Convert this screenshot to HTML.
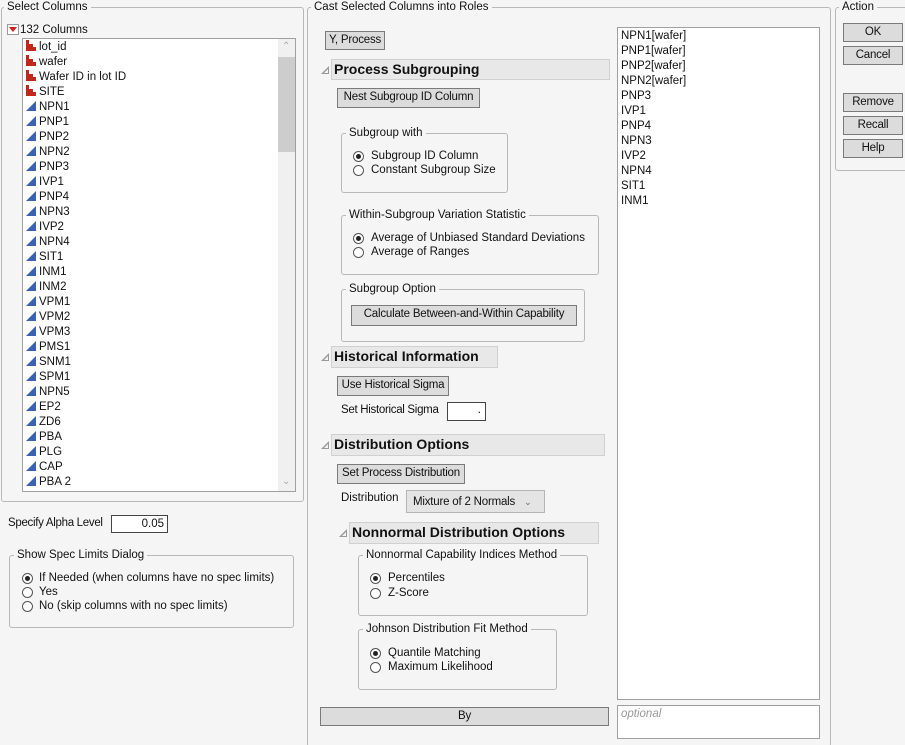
<!DOCTYPE html>
<html style="overflow:hidden;height:745px"><head><style>
*{box-sizing:border-box;margin:0;padding:0}
body{width:905px;height:745px;background:#f5f5f5;font-family:"Liberation Sans",sans-serif;font-size:11.5px;color:#111;position:relative;overflow:hidden}
.a{position:absolute;white-space:nowrap}
.fs{position:absolute;border:1px solid #b8b8b8;border-radius:3px}
.lg{position:absolute;background:#f5f5f5;padding:0 3px;line-height:14px;white-space:nowrap}
.btn{position:absolute;background:#dcdcdc;border:1px solid #7a7a7a;text-align:center;line-height:17px;white-space:nowrap;overflow:hidden;letter-spacing:-0.2px}
.hdr{position:absolute;background:#e8e8e8;border:1px solid #d0d0d0;font-weight:bold;font-size:14px;line-height:19px;padding-left:2px}
.tri{position:absolute;width:0;height:0;border-left:8px solid transparent;border-bottom:8px solid #999}
.tri::after{content:"";position:absolute;left:-5px;top:3px;width:0;height:0;border-left:4px solid transparent;border-bottom:4px solid #f5f5f5}
.rad{position:absolute;width:11px;height:11px;border:1px solid #555;border-radius:50%;background:#fff}
.rad.on::after{content:"";position:absolute;left:2px;top:2px;width:5px;height:5px;border-radius:50%;background:#222}
.box{position:absolute;background:#fff;border:1px solid #a0a0a0}
.it{position:absolute;left:3px;height:15px;line-height:15px}
.nom{display:inline-block;width:10px;height:11px;vertical-align:-1px;margin-right:3px;position:relative}
.nom i{position:absolute;bottom:0;background:#c0281e;width:3px}
.con{display:inline-block;width:0;height:0;border-left:10px solid transparent;border-bottom:10px solid #3b62b0;margin-right:3px;vertical-align:-1px}
</style></head><body>

<div class="fs" style="left:1px;top:7px;width:303px;height:495px"></div>
<div class="lg" style="left:4px;top:0">Select Columns</div>
<div class="a" style="left:7px;top:24px;width:12px;height:11px;border:1px solid #999;background:#fff"></div>
<div class="a" style="left:9px;top:27px;width:0;height:0;border-left:4px solid transparent;border-right:4px solid transparent;border-top:5px solid #d0201a"></div>
<div class="a" style="left:20px;top:23px;line-height:14px">132 Columns</div>
<div class="box" style="left:22px;top:38px;width:274px;height:454px;overflow:hidden">
 <div class="a" style="left:255px;top:0;width:17px;height:452px;background:#f0f0f0"></div>
 <div class="a" style="left:255px;top:18px;width:17px;height:95px;background:#cdcdcd"></div>
 <div class="a" style="left:259px;top:2px;color:#aaa;font-size:10px">&#8963;</div>
 <div class="a" style="left:259px;top:437px;color:#aaa;font-size:10px">&#8964;</div>
 <div class="it" style="top:1px"><span class="nom"><i style="left:0;height:11px"></i><i style="left:3px;height:7px;width:4px"></i><i style="left:7px;height:4px"></i></span>lot_id</div>
 <div class="it" style="top:16px"><span class="nom"><i style="left:0;height:11px"></i><i style="left:3px;height:7px;width:4px"></i><i style="left:7px;height:4px"></i></span>wafer</div>
 <div class="it" style="top:31px"><span class="nom"><i style="left:0;height:11px"></i><i style="left:3px;height:7px;width:4px"></i><i style="left:7px;height:4px"></i></span>Wafer ID in lot ID</div>
 <div class="it" style="top:46px"><span class="nom"><i style="left:0;height:11px"></i><i style="left:3px;height:7px;width:4px"></i><i style="left:7px;height:4px"></i></span>SITE</div>
 <div class="it" style="top:61px"><span class="con"></span>NPN1</div>
 <div class="it" style="top:76px"><span class="con"></span>PNP1</div>
 <div class="it" style="top:91px"><span class="con"></span>PNP2</div>
 <div class="it" style="top:106px"><span class="con"></span>NPN2</div>
 <div class="it" style="top:121px"><span class="con"></span>PNP3</div>
 <div class="it" style="top:136px"><span class="con"></span>IVP1</div>
 <div class="it" style="top:151px"><span class="con"></span>PNP4</div>
 <div class="it" style="top:166px"><span class="con"></span>NPN3</div>
 <div class="it" style="top:181px"><span class="con"></span>IVP2</div>
 <div class="it" style="top:196px"><span class="con"></span>NPN4</div>
 <div class="it" style="top:211px"><span class="con"></span>SIT1</div>
 <div class="it" style="top:226px"><span class="con"></span>INM1</div>
 <div class="it" style="top:241px"><span class="con"></span>INM2</div>
 <div class="it" style="top:256px"><span class="con"></span>VPM1</div>
 <div class="it" style="top:271px"><span class="con"></span>VPM2</div>
 <div class="it" style="top:286px"><span class="con"></span>VPM3</div>
 <div class="it" style="top:301px"><span class="con"></span>PMS1</div>
 <div class="it" style="top:316px"><span class="con"></span>SNM1</div>
 <div class="it" style="top:331px"><span class="con"></span>SPM1</div>
 <div class="it" style="top:346px"><span class="con"></span>NPN5</div>
 <div class="it" style="top:361px"><span class="con"></span>EP2</div>
 <div class="it" style="top:376px"><span class="con"></span>ZD6</div>
 <div class="it" style="top:391px"><span class="con"></span>PBA</div>
 <div class="it" style="top:406px"><span class="con"></span>PLG</div>
 <div class="it" style="top:421px"><span class="con"></span>CAP</div>
 <div class="it" style="top:436px"><span class="con"></span>PBA 2</div>
</div>

<div class="a" style="left:8px;top:517px;letter-spacing:-0.3px">Specify Alpha Level</div>
<div class="box" style="left:111px;top:515px;width:57px;height:18px;text-align:right;padding-right:3px;line-height:16px;border-color:#444">0.05</div>
<div class="fs" style="left:9px;top:555px;width:285px;height:73px"></div>
<div class="lg" style="left:14px;top:548px">Show Spec Limits Dialog</div>
<div class="rad on" style="left:22px;top:573px"></div><div class="a" style="left:39px;top:572px">If Needed (when columns have no spec limits)</div>
<div class="rad" style="left:22px;top:587px"></div><div class="a" style="left:39px;top:586px">Yes</div>
<div class="rad" style="left:22px;top:601px"></div><div class="a" style="left:39px;top:600px">No (skip columns with no spec limits)</div>

<div class="fs" style="left:307px;top:7px;width:524px;height:740px;border-bottom:none"></div>
<div class="lg" style="left:311px;top:0">Cast Selected Columns into Roles</div>
<div class="btn" style="left:325px;top:31px;width:60px;height:19px">Y, Process</div>

<div class="tri" style="left:321px;top:66px"></div>
<div class="hdr" style="left:331px;top:59px;width:279px;height:21px">Process Subgrouping</div>
<div class="btn" style="left:337px;top:88px;width:143px;height:20px">Nest Subgroup ID Column</div>

<div class="fs" style="left:341px;top:133px;width:167px;height:60px"></div>
<div class="lg" style="left:346px;top:126px">Subgroup with</div>
<div class="rad on" style="left:353px;top:151px"></div><div class="a" style="left:371px;top:150px">Subgroup ID Column</div>
<div class="rad" style="left:353px;top:165px"></div><div class="a" style="left:371px;top:164px">Constant Subgroup Size</div>

<div class="fs" style="left:341px;top:215px;width:258px;height:60px"></div>
<div class="lg" style="left:346px;top:208px">Within-Subgroup Variation Statistic</div>
<div class="rad on" style="left:353px;top:233px"></div><div class="a" style="left:371px;top:232px">Average of Unbiased Standard Deviations</div>
<div class="rad" style="left:353px;top:247px"></div><div class="a" style="left:371px;top:246px">Average of Ranges</div>

<div class="fs" style="left:341px;top:289px;width:244px;height:53px"></div>
<div class="lg" style="left:346px;top:282px">Subgroup Option</div>
<div class="btn" style="left:351px;top:305px;width:226px;height:21px">Calculate Between-and-Within Capability</div>

<div class="tri" style="left:321px;top:353px"></div>
<div class="hdr" style="left:331px;top:346px;width:167px;height:22px">Historical Information</div>
<div class="btn" style="left:337px;top:376px;width:112px;height:20px">Use Historical Sigma</div>
<div class="a" style="left:341px;top:404px;letter-spacing:-0.3px">Set Historical Sigma</div>
<div class="box" style="left:447px;top:402px;width:39px;height:19px;border-color:#444;text-align:right;padding-right:4px;line-height:15px">.</div>

<div class="tri" style="left:321px;top:441px"></div>
<div class="hdr" style="left:331px;top:434px;width:274px;height:22px">Distribution Options</div>
<div class="btn" style="left:337px;top:464px;width:128px;height:20px">Set Process Distribution</div>
<div class="a" style="left:341px;top:492px">Distribution</div>
<div class="btn" style="left:406px;top:490px;width:139px;height:23px;line-height:23px;background:#e4e4e4;border-color:#b5b5b5;text-align:left;padding-left:6px">Mixture of 2 Normals <span style="font-size:9px;color:#666;margin-left:6px">&#8964;</span></div>

<div class="tri" style="left:339px;top:529px"></div>
<div class="hdr" style="left:349px;top:522px;width:250px;height:22px">Nonnormal Distribution Options</div>

<div class="fs" style="left:358px;top:555px;width:230px;height:61px"></div>
<div class="lg" style="left:363px;top:548px">Nonnormal Capability Indices Method</div>
<div class="rad on" style="left:370px;top:573px"></div><div class="a" style="left:388px;top:572px">Percentiles</div>
<div class="rad" style="left:370px;top:588px"></div><div class="a" style="left:388px;top:587px">Z-Score</div>

<div class="fs" style="left:358px;top:629px;width:199px;height:61px"></div>
<div class="lg" style="left:363px;top:622px">Johnson Distribution Fit Method</div>
<div class="rad on" style="left:370px;top:648px"></div><div class="a" style="left:388px;top:647px">Quantile Matching</div>
<div class="rad" style="left:370px;top:662px"></div><div class="a" style="left:388px;top:661px">Maximum Likelihood</div>

<div class="btn" style="left:320px;top:707px;width:289px;height:19px">By</div>

<div class="box" style="left:617px;top:27px;width:203px;height:673px">
 <div class="a" style="left:3px;top:1px;line-height:15px">NPN1[wafer]<br>PNP1[wafer]<br>PNP2[wafer]<br>NPN2[wafer]<br>PNP3<br>IVP1<br>PNP4<br>NPN3<br>IVP2<br>NPN4<br>SIT1<br>INM1</div>
</div>
<div class="box" style="left:617px;top:705px;width:203px;height:34px"><div class="a" style="left:3px;top:2px;font-style:italic;color:#999">optional</div></div>

<div class="fs" style="left:835px;top:7px;width:75px;height:164px"></div>
<div class="lg" style="left:839px;top:0">Action</div>
<div class="btn" style="left:843px;top:23px;width:60px;height:19px">OK</div>
<div class="btn" style="left:843px;top:46px;width:60px;height:19px">Cancel</div>
<div class="btn" style="left:843px;top:93px;width:60px;height:19px">Remove</div>
<div class="btn" style="left:843px;top:116px;width:60px;height:19px">Recall</div>
<div class="btn" style="left:843px;top:139px;width:60px;height:19px">Help</div>
</body></html>
